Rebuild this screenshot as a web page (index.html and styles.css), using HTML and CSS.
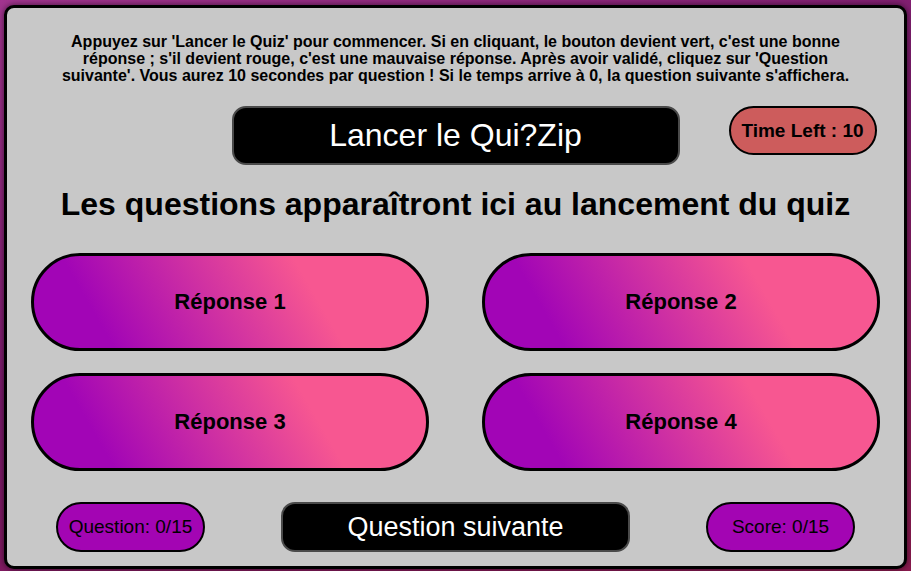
FILE: index.html
```html
<!DOCTYPE html>
<html lang="fr">
<head>
<meta charset="utf-8">
<title>Qui?Zip</title>
<link rel="stylesheet" href="styles.css">
</head>
<body>
<main class="quiz">
  <p class="intro">Appuyez sur 'Lancer le Quiz' pour commencer. Si en cliquant, le bouton devient vert, c'est une bonne réponse ; s'il devient rouge, c'est une mauvaise réponse. Après avoir validé, cliquez sur 'Question suivante'. Vous aurez 10 secondes par question ! Si le temps arrive à 0, la question suivante s'affichera.</p>
  <div class="top-row">
    <span></span>
    <button class="btn-dark btn-start">Lancer le Qui?Zip</button>
    <div class="timer">Time Left : 10</div>
  </div>
  <h1 class="question">Les questions apparaîtront ici au lancement du quiz</h1>
  <div class="answers">
    <button class="answer">Réponse 1</button>
    <button class="answer">Réponse 2</button>
    <button class="answer">Réponse 3</button>
    <button class="answer">Réponse 4</button>
  </div>
  <div class="bottom-row">
    <div class="pill">Question: 0/15</div>
    <button class="btn-dark btn-next">Question suivante</button>
    <div class="pill">Score: 0/15</div>
  </div>
</main>
</body>
</html>
```
FILE: styles.css
```css
* { box-sizing: border-box; }
html, body { height: 100%; }
body {
  margin: 0;
  padding: 5px 4px 2px 4px;
  background: linear-gradient(160deg, #a2358f 0%, #7a1a6a 45%, #8a1a4e 100%);
  font-family: "Liberation Sans", Arial, sans-serif;
}
.quiz {
  height: 564px;
  background: #c8c8c8;
  border: 3px solid #000;
  border-radius: 10px;
  box-shadow: 0 0 6px rgba(0,0,0,0.6);
  display: flex;
  flex-direction: column;
  align-items: center;
}
.intro {
  width: 810px;
  margin: 25px 0 0 0;
  font-size: 16px;
  line-height: 17px;
  font-weight: bold;
  text-align: center;
  color: #000;
}
.top-row {
  margin-top: 22px;
  width: 100%;
  display: grid;
  grid-template-columns: 1fr auto 1fr;
  align-items: start;
}
button {
  font-family: "Liberation Sans", Arial, sans-serif;
  cursor: pointer;
}
.btn-dark {
  background: #000;
  color: #fff;
  border: 2px solid #4a4a4a;
  border-radius: 14px;
}
.btn-start {
  width: 448px;
  height: 59px;
  font-size: 32px;
}
.timer {
  justify-self: start;
  margin-left: 49px;
  width: 148px;
  height: 49px;
  background: #cd5c5c;
  border: 2px solid #000;
  border-radius: 25px;
  font-size: 19px;
  font-weight: bold;
  display: flex;
  align-items: center;
  justify-content: center;
}
.question {
  margin: 21px 0 0 0;
  font-size: 32px;
  line-height: 37px;
  font-weight: bold;
  color: #000;
}
.answers {
  margin-top: 30px;
  display: grid;
  grid-template-columns: 398px 398px;
  column-gap: 53px;
  row-gap: 22px;
}
.answer {
  height: 98px;
  border: 3px solid #000;
  border-radius: 50px;
  background: linear-gradient(60deg, #a205b6 18%, #f75791 70%);
  font-size: 22px;
  font-weight: bold;
  color: #000;
}
.bottom-row {
  margin-top: 31px;
  display: flex;
  gap: 76px;
  align-items: center;
}
.pill {
  width: 149px;
  height: 50px;
  background: #a305b3;
  border: 2px solid #000;
  border-radius: 25px;
  font-size: 19px;
  display: flex;
  align-items: center;
  justify-content: center;
  color: #000;
}
.btn-next {
  width: 349px;
  height: 50px;
  font-size: 27px;
}
```
